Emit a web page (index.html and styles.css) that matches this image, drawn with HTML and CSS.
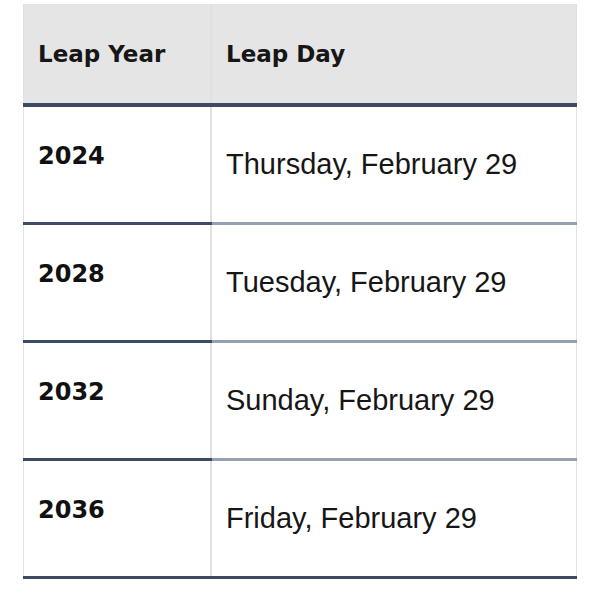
FILE: index.html
```html
<!DOCTYPE html>
<html>
<head>
<meta charset="utf-8">
<link rel="stylesheet" href="styles.css">
</head>
<body>
<table class="leap">
  <thead>
    <tr><th class="c-year">Leap Year</th><th class="c-day">Leap Day</th></tr>
  </thead>
  <tbody>
    <tr><td class="year">2024</td><td class="day">Thursday, February 29</td></tr>
    <tr><td class="year">2028</td><td class="day">Tuesday, February 29</td></tr>
    <tr><td class="year">2032</td><td class="day">Sunday, February 29</td></tr>
    <tr><td class="year">2036</td><td class="day">Friday, February 29</td></tr>
  </tbody>
</table>
</body>
</html>
```
FILE: styles.css
```css
html, body { margin: 0; padding: 0; background: #fff; }
body { padding: 4px 23px 0 23px; }
.leap {
  width: 554px;
  border-collapse: collapse;
  table-layout: fixed;
}
.leap th {
  background: #e5e5e5;
  height: 99px;
  padding: 0 0 0 14px;
  text-align: left;
  vertical-align: middle;
  font-family: "DejaVu Sans", sans-serif;
  font-weight: 700;
  font-size: 23px;
  color: #161616;
  border-bottom: 4px solid #3d4b66;
  border-left: 1px solid #e0e0e0;
}
.leap th.c-year { width: 172px; }
.leap th.c-day { border-left: 2px solid #e0e0e0; border-right: 1px solid #e0e0e0; }
.leap td {
  padding: 0;
  border-bottom: 3px solid #3d4b66;
}
.leap td.year {
  padding: 0 0 18px 14px;
  vertical-align: middle;
  font-family: "DejaVu Sans", sans-serif;
  font-weight: 700;
  font-size: 24px;
  color: #111;
  border-left: 1px solid #e2e2e2;
}
.leap td.day {
  height: 115px;
  padding: 0 0 0 14px;
  vertical-align: middle;
  font-family: "Liberation Sans", Arial, sans-serif;
  font-size: 29px;
  color: #161616;
  border-left: 2px solid #e0e1e4;
  border-right: 1px solid #e2e2e2;
  border-bottom-color: #95a1b0;
}
.leap tr:last-child td.day { border-bottom-color: #3d4b66; }
```
